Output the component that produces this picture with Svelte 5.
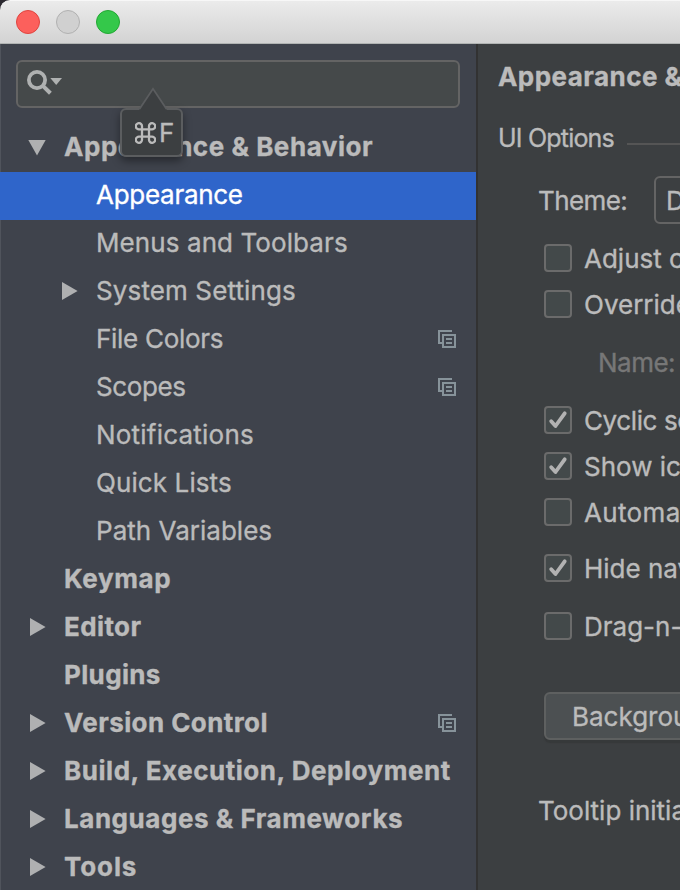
<script>
  const tree = [
    { label: 'Appearance & Behavior', level: 0, arrow: 'down', ls: 0.54 },
    { label: 'Appearance', level: 1, selected: true, ls: -0.28 },
    { label: 'Menus and Toolbars', level: 1, ls: 0.09 },
    { label: 'System Settings', level: 1, arrow: 'right', ls: 0.12 },
    { label: 'File Colors', level: 1, scoped: true, ls: -0.28 },
    { label: 'Scopes', level: 1, scoped: true, ls: -0.4 },
    { label: 'Notifications', level: 1, ls: 0.22 },
    { label: 'Quick Lists', level: 1, ls: 0.1 },
    { label: 'Path Variables', level: 1, ls: 0.02 },
    { label: 'Keymap', level: 0, ls: 0.6 },
    { label: 'Editor', level: 0, arrow: 'right', ls: 0.4 },
    { label: 'Plugins', level: 0, ls: 0.35 },
    { label: 'Version Control', level: 0, arrow: 'right', scoped: true, ls: 0.42 },
    { label: 'Build, Execution, Deployment', level: 0, arrow: 'right', ls: 0.54 },
    { label: 'Languages & Frameworks', level: 0, arrow: 'right', ls: 0.54 },
    { label: 'Tools', level: 0, arrow: 'right', ls: 0.9 }
  ];
</script>

{#snippet check(label, checked, gap, ls = 0)}
  <label class="option" style:margin-top="{gap}px" style:letter-spacing="{ls}px">
    <span class="box">
      {#if checked}
        <svg width="28" height="28" viewBox="0 0 28 28"><path d="M7.2 15.2 L11.5 20 L20.7 7.3" fill="none" stroke="#b2b2b2" stroke-width="3.8" stroke-linecap="round" stroke-linejoin="round" /></svg>
      {/if}
    </span>
    <span>{label}</span>
  </label>
{/snippet}

<div class="window">
  <header class="titlebar">
    <i class="light red"></i>
    <i class="light grey"></i>
    <i class="light green"></i>
  </header>
  <div class="body">
    <aside class="sidebar">
      <div class="search">
        <svg width="40" height="30" viewBox="0 0 40 30">
          <circle cx="11" cy="12" r="8.1" fill="none" stroke="#afb1b1" stroke-width="3.8" />
          <path d="M16.4 17.4 L24.4 25.2" stroke="#afb1b1" stroke-width="4" />
          <path d="M24.3 10 H36 L30.2 17 Z" fill="#afb1b1" />
        </svg>
        <div class="tip">
          <svg class="tail" width="32" height="24" viewBox="0 0 32 24">
            <path d="M2.5 22 L16 1.8 L29.5 22 V24 H2.5 Z" fill="#3c3f41" />
            <path d="M2.5 22 L16 1.8 L29.5 22" fill="none" stroke="#5b5d5f" stroke-width="1.8" />
          </svg>
          <svg class="cmd" width="21" height="22" viewBox="0 0 21 22"><path d="M7 7.3 H14 V14.7 H7 Z M7 7.3 H4.4 A3.1 3.1 0 1 1 7 4.4 Z M14 7.3 V4.4 A3.1 3.1 0 1 1 16.6 7.3 Z M14 14.7 H16.6 A3.1 3.1 0 1 1 14 17.6 Z M7 14.7 V17.6 A3.1 3.1 0 1 1 4.4 14.7 Z" fill="none" stroke="#bbb" stroke-width="2.3" /></svg>
          <span>F</span>
        </div>
      </div>
      <nav>
        {#each tree as item}
          <div class="row" class:child={item.level === 1} class:selected={item.selected}>
            <span class="arrow">
              {#if item.arrow === 'down'}
                <svg width="18" height="18" viewBox="0 0 18 18"><path d="M0.3 2 H17.7 L9 17.4 Z" fill="#afb0b1" /></svg>
              {:else if item.arrow}
                <svg width="18" height="18" viewBox="0 0 18 18"><path d="M2 0 V18 L17.6 9 Z" fill="#afb0b1" /></svg>
              {/if}
            </span>
            <span class="text" style:letter-spacing="{item.ls}px">{item.label}</span>
            {#if item.scoped}
              <svg class="scope" width="18" height="18" viewBox="0 0 18 18">
                <path d="M0 0 H14 V2 H2 V12 H4 V14 H0 Z" fill="#87939a" />
                <path d="M4 4 H18 V18 H4 Z M6 6 V16 H16 V6 Z M8 8 H14 V10 H8 Z M8 12 H14 V14 H8 Z" fill="#87939a" fill-rule="evenodd" />
              </svg>
            {/if}
          </div>
        {/each}
      </nav>
    </aside>
    <main class="panel">
      <h1>Appearance &amp; Behavior</h1>
      <div class="section"><span>UI Options</span><hr /></div>
      <div class="theme"><span>Theme:</span><div class="select">Darcula</div></div>
      {@render check('Adjust colors', false, 20)}
      {@render check('Override default', false, 18)}
      <div class="name">Name:</div>
      {@render check('Cyclic scrolling', true, 28, -0.4)}
      {@render check('Show icons', true, 18)}
      {@render check('Automatically', false, 18, 0.35)}
      {@render check('Hide navigation', true, 28)}
      {@render check('Drag-n-Drop', false, 30)}
      <div class="button">Background Image...</div>
      <div class="tooltip-label">Tooltip initial delay</div>
    </main>
  </div>
</div>

<style>
  :global(body) { margin: 0; background: #3c3f41; overflow: hidden; }
  .window {
    width: 680px; height: 890px; overflow: hidden; display: flex; flex-direction: column;
    background: #2b2930; color: #bbb; font: 26px/32px Inter, "Liberation Sans", sans-serif; white-space: nowrap;
    -webkit-text-stroke: 0.35px currentColor;
  }
  .titlebar {
    box-sizing: border-box; flex: none; height: 44px; padding: 9px 16px; display: flex; gap: 16px;
    background: linear-gradient(#ebebeb, #d3d3d3); border-top: 1px solid #f7f7f7; border-bottom: 1px solid #b1b4b3;
    border-top-left-radius: 10px;
  }
  .light { box-sizing: border-box; width: 24px; height: 24px; border-radius: 50%; border: 1px solid; }
  .red { background: #fc605c; border-color: #e0443f; }
  .grey { background: #d0d0d0; border-color: #b1b1b1; }
  .green { background: #34c84a; border-color: #22a833; }
  .body { flex: 1; min-height: 0; display: flex; }
  .sidebar {
    box-sizing: border-box; flex: none; width: 478px; background: #3f434c;
    border-right: 2px solid #323232; box-shadow: inset 1px 0 #50545c;
  }
  .search {
    box-sizing: border-box; position: relative; width: 444px; height: 48px; margin: 16px 0 16px 16px;
    border: 2px solid #646464; border-radius: 6px; background: #45494a; padding: 6px 8px;
  }
  .search svg { display: block; }
  .tip {
    position: absolute; z-index: 2; left: 102px; top: 46px; width: 63px; height: 49px; box-sizing: border-box;
    border: 2px solid #5b5d5f; border-radius: 6px; background: #3c3f41; box-shadow: 0 4px 9px rgba(0,0,0,.4);
    display: flex; align-items: center; padding-left: 12.5px; gap: 3.5px;
  }
  .tip .tail { position: absolute; left: 14.5px; top: -23px; }
  .tip span { line-height: 46px; }
  .row { height: 48px; display: flex; align-items: center; padding: 0 20px 0 28px; font-weight: 700; }
  .row.child { padding-left: 60px; font-weight: 400; }
  .row.selected { background: #2f65ca; color: #fff; }
  .arrow { width: 18px; height: 18px; margin: 0 18px 2px 0; flex: none; }
  .arrow svg { display: block; }
  .text { padding-bottom: 3px; }
  .scope { margin: 0 0 2px auto; }
  .panel { flex: 1; min-width: 0; overflow: hidden; background: #3c3f41; }
  h1 { margin: 17px 0 0 20px; font: inherit; font-weight: 700; letter-spacing: 0.45px; }
  .section { display: flex; align-items: center; gap: 13px; margin: 29px 0 0 20px; }
  .section span { font-size: 25px; letter-spacing: -0.8px; }
  hr { flex: 1; margin: 12px 0 0; height: 2px; border: 0; background: #555555; }
  .theme { display: flex; align-items: center; margin: 22px 0 0 60px; height: 48px; }
  .theme span { flex: none; width: 116px; line-height: 46px; padding-top: 2px; letter-spacing: -0.6px; }
  .select { flex: none; box-sizing: border-box; width: 200px; height: 48px; line-height: 46px; border: 2px solid #646464; border-radius: 6px; padding-left: 10px; }
  .option { display: flex; gap: 12px; margin-left: 66px; height: 28px; line-height: 30px; }
  .box { box-sizing: border-box; flex: none; width: 28px; height: 28px; border: 2px solid #6b6b6b; border-radius: 4px; background: #43494a; }
  .box svg { display: block; margin: -2px; }
  .name { margin: 29px 0 0 120px; height: 31px; color: #777; letter-spacing: -0.5px; }
  .button {
    box-sizing: border-box; width: 300px; height: 48px; margin: 52px 0 0 66px; padding-left: 26px; line-height: 46px;
    background: #4c5052; border: 2px solid #5e6060; border-radius: 6px; box-shadow: 0 3px 1px #36393a;
  }
  .tooltip-label { margin: 55px 0 0 60px; }
</style>
